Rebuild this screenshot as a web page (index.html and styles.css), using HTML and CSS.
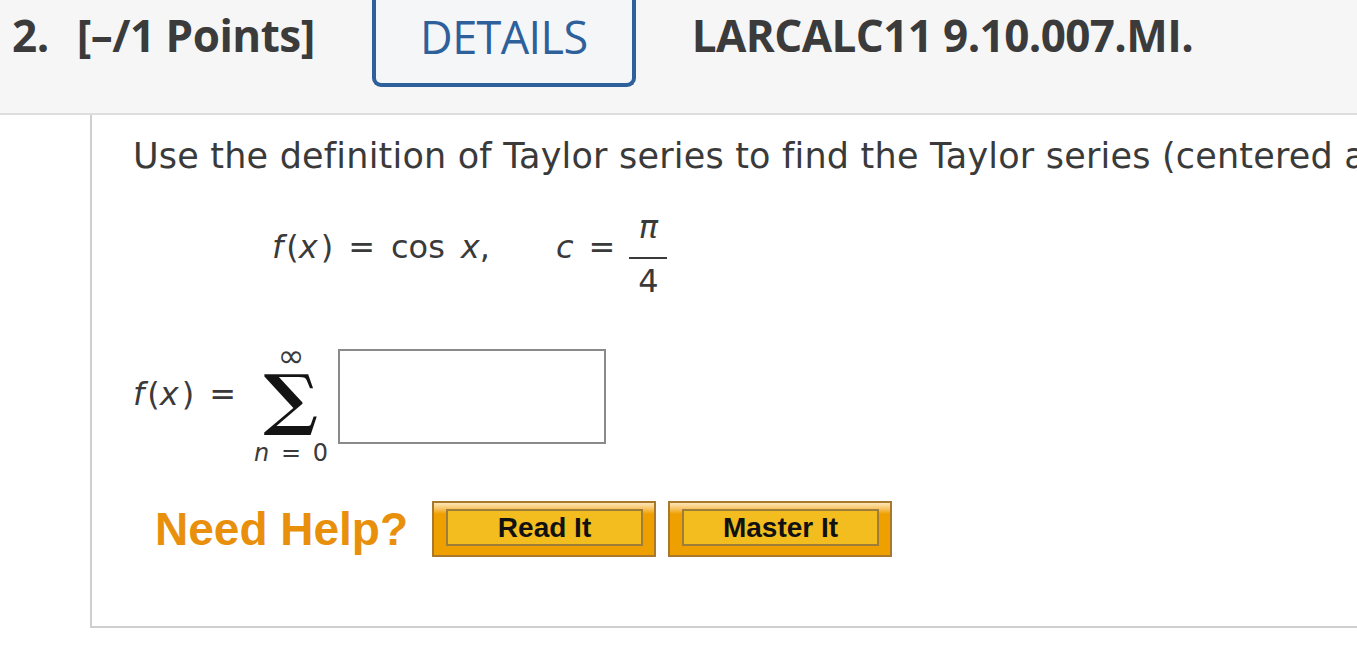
FILE: index.html
```html
<!DOCTYPE html>
<html>
<head>
<meta charset="utf-8">
<link rel="stylesheet" href="styles.css">
</head>
<body>
<header class="qhead">
  <span class="qnum">2.</span>
  <span class="qpts">[–/1 Points]</span>
  <div class="details">DETAILS</div>
  <span class="qcode">LARCALC11 9.10.007.MI.</span>
</header>
<section class="qbody">
  <p class="prompt">Use the definition of Taylor series to find the Taylor series (centered at c) for the function.</p>
  <div class="given">
    <span class="m expr"><i class="mi">f</i>(<i class="mi">x</i>)<span class="mo">=</span>cos<span class="gap"></span><i>x</i>,</span>
    <span class="m expr cval"><i class="mi">c</i><span class="mo">=</span></span>
    <span class="frac"><span class="num"><i>π</i></span><span class="den">4</span></span>
  </div>
  <div class="answer">
    <span class="m expr lhs"><i class="mi">f</i>(<i class="mi">x</i>)<span class="mo">=</span></span>
    <span class="sum">
      <span class="sup">∞</span>
      <span class="sigma">∑</span>
      <span class="sub"><i>n</i> = 0</span>
    </span>
    <span class="box"></span>
  </div>
  <div class="help">
    <span class="need">Need Help?</span>
    <button class="hbtn"><span class="inner">Read It</span></button>
    <button class="hbtn"><span class="inner">Master It</span></button>
  </div>
</section>
</body>
</html>
```
FILE: styles.css
```css
html, body {
  margin: 0;
  padding: 0;
  background: #fff;
  overflow: hidden;
}
body {
  width: 1357px;
  height: 648px;
  font-family: "Open Sans", sans-serif;
  color: #3a3a3a;
}
.qhead {
  height: 113px;
  background: #f6f6f6;
  border-bottom: 2px solid #dedede;
  display: flex;
  align-items: flex-start;
  font-size: 44px;
  font-weight: 700;
  color: #3b3b3b;
  line-height: 1;
}
.qnum {
  margin-left: 12px;
  margin-top: 13px;
  letter-spacing: -0.5px;
}
.qpts {
  margin-left: 28px;
  margin-top: 13px;
  letter-spacing: -0.5px;
}
.details {
  margin-left: 57px;
  width: 256px;
  height: 69px;
  border: 4px solid #2e609b;
  border-top: none;
  border-radius: 0 0 9px 9px;
  background: #f5f6f7;
  color: #2e609b;
  font-weight: 400;
  font-size: 45px;
  letter-spacing: -0.6px;
  display: flex;
  justify-content: center;
  padding-top: 14px;
}
.qcode {
  margin-left: 56px;
  margin-top: 13px;
  letter-spacing: -0.6px;
}
.qbody {
  margin-left: 90px;
  height: 513px;
  box-sizing: border-box;
  border-left: 2px solid #cfcfcf;
  border-bottom: 2px solid #cfcfcf;
  padding: 21px 0 0 41px;
  overflow: hidden;
}
.prompt {
  margin: 0;
  font-family: "DejaVu Sans", Verdana, sans-serif;
  font-size: 35px;
  line-height: 40px;
  letter-spacing: 0.2px;
  white-space: nowrap;
  font-variant-ligatures: none;
  color: #3a3a3a;
}
.m {
  font-family: "DejaVu Sans", Verdana, sans-serif;
  font-size: 32px;
  line-height: 38px;
  color: #3a3a3a;
  white-space: nowrap;
}
.mi {
  padding-right: 3px;
}
.mo {
  display: inline-block;
  margin: 0 16px 0 15px;
}
.gap {
  display: inline-block;
  width: 16px;
}
.given {
  display: flex;
  align-items: flex-start;
  margin: 35px 0 0 139px;
}
.given .expr {
  margin-top: 17px;
}
.given .cval {
  margin-left: 66px;
}
.given .cval .mo {
  margin-left: 12px;
  margin-right: 14px;
}
.frac {
  display: inline-flex;
  flex-direction: column;
  align-items: center;
  font-family: "DejaVu Sans", Verdana, sans-serif;
  font-size: 32px;
  line-height: 32px;
  color: #3a3a3a;
}
.frac .num {
  width: 38px;
  text-align: center;
  padding-bottom: 14px;
  border-bottom: 2px solid #3a3a3a;
}
.frac .den {
  margin-top: 6px;
}
.answer {
  display: flex;
  align-items: flex-start;
  margin-top: 50px;
}
.answer .lhs {
  margin-top: 28px;
}
.answer .lhs .mo {
  margin-right: 10px;
}
.sum {
  display: inline-flex;
  flex-direction: column;
  align-items: center;
  font-family: "DejaVu Sans", Verdana, sans-serif;
  color: #3a3a3a;
  width: 90px;
  margin-left: 0;
}
.sup {
  font-size: 32px;
  line-height: 20px;
  margin-top: -1px;
}
.sigma {
  font-family: "DejaVu Serif", serif;
  font-weight: 700;
  font-size: 66px;
  line-height: 60px;
  margin-top: 3px;
  color: #141414;
  transform: scaleX(1.1);
}
.sub {
  font-size: 24px;
  line-height: 28px;
  margin-top: 10px;
  word-spacing: 4px;
}
.box {
  width: 264px;
  height: 91px;
  border: 2px solid #8a8a8a;
  margin-left: 2px;
  margin-top: 2px;
}
.help {
  display: flex;
  align-items: center;
  margin-top: 34px;
  margin-left: 22px;
}
.need {
  font-family: "Liberation Sans", Arial, sans-serif;
  font-weight: 700;
  font-size: 46px;
  color: #e8900c;
  margin-right: 24px;
}
.hbtn {
  width: 224px;
  height: 56px;
  padding: 6px 11px 9px 12px;
  margin: 0 12px 0 0;
  border: 2px solid #a9782c;
  background: linear-gradient(#fde6b8 0, #f8c870 5px, #eea000 11px, #eda000 100%);
  box-sizing: border-box;
  display: flex;
  cursor: pointer;
}
.hbtn .inner {
  flex: 1;
  border: 2px solid #9e7c3a;
  background: #f3bd20;
  display: flex;
  align-items: center;
  justify-content: center;
  font-family: "Liberation Sans", Arial, sans-serif;
  font-weight: 700;
  font-size: 28px;
  color: #111;
}
```
